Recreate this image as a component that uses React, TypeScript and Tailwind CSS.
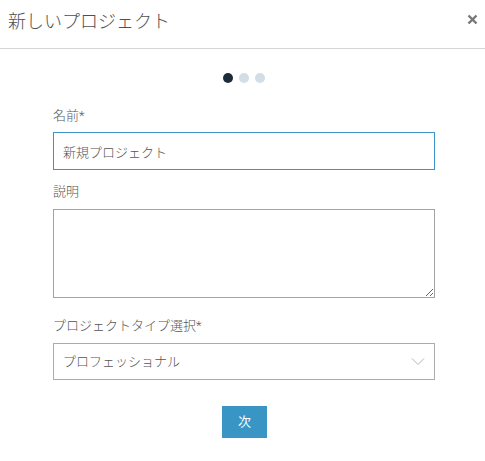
import { useState } from "react";

const font = {
  fontFamily: 'Roboto, "Noto Sans CJK JP", sans-serif',
};

const App = () => {
  const [name, setName] = useState("新規プロジェクト");
  const [desc, setDesc] = useState("");
  const [type, setType] = useState("professional");

  return (
    <div className="w-[485px] h-[461px] bg-white text-[#555]" style={font}>
      {/* Header */}
      <div className="h-[49px] border-b border-[#d4d4d4] flex items-start justify-between pt-[9px] pl-[8px] pr-[7px]">
        <h1 className="text-[18px] leading-[26px] text-[#4f4f4f] font-light">新しいプロジェクト</h1>
        <button className="mt-[4px] w-[12px] h-[12px] flex items-center justify-center">
          <svg width="11" height="11" viewBox="0 0 11 11">
            <path d="M1.5 1.5L9.5 9.5M9.5 1.5L1.5 9.5" stroke="#777" strokeWidth="2.4" strokeLinecap="butt" />
          </svg>
        </button>
      </div>

      {/* Step dots */}
      <div className="flex justify-center gap-[6px] mt-[24px] pl-[2px]">
        <span className="w-[10px] h-[10px] rounded-full bg-[#1c2b3a]"></span>
        <span className="w-[10px] h-[10px] rounded-full bg-[#d3dde4]"></span>
        <span className="w-[10px] h-[10px] rounded-full bg-[#d3dde4]"></span>
      </div>

      {/* Form */}
      <div className="pl-[53px] pr-[50px] mt-[23px] flex flex-col font-light">
        <label className="text-[13px] leading-[20px] text-[#555]">名前*</label>
        <input
          value={name}
          onChange={(e) => setName(e.target.value)}
          className="mt-[6px] h-[38px] w-full border border-[#3a95c6] px-[9px] text-[13px] text-[#555] outline-none font-light"
          style={font}
        />

        <label className="mt-[12px] text-[13px] leading-[20px] text-[#555]">説明</label>
        <textarea
          value={desc}
          onChange={(e) => setDesc(e.target.value)}
          className="mt-[7px] h-[89px] w-full border border-[#a3a3a3] px-[9px] py-[6px] text-[13px] outline-none block"
          style={{ ...font, resize: "both" }}
        />

        <label className="mt-[18px] text-[13px] leading-[20px] text-[#555]">プロジェクトタイプ選択*</label>
        <div className="relative mt-[7px]">
          <select
            value={type}
            onChange={(e) => setType(e.target.value)}
            className="appearance-none h-[37px] w-full border border-[#ababab] bg-white px-[9px] text-[13px] text-[#555] outline-none font-light"
            style={font}
          >
            <option value="professional">プロフェッショナル</option>
            <option value="personal">パーソナル</option>
          </select>
          <svg className="absolute right-[10px] top-[14px] pointer-events-none" width="14" height="9" viewBox="0 0 14 9">
            <path d="M1 1.5L7 7.5L13 1.5" fill="none" stroke="#b5b5b5" strokeWidth="1" />
          </svg>
        </div>

        <div className="flex justify-center mt-[26px] pl-[1px]">
          <button className="w-[45px] h-[32px] bg-[#3996c4] text-white text-[13px] font-normal">次</button>
        </div>
      </div>
    </div>
  );
};

export default App;
